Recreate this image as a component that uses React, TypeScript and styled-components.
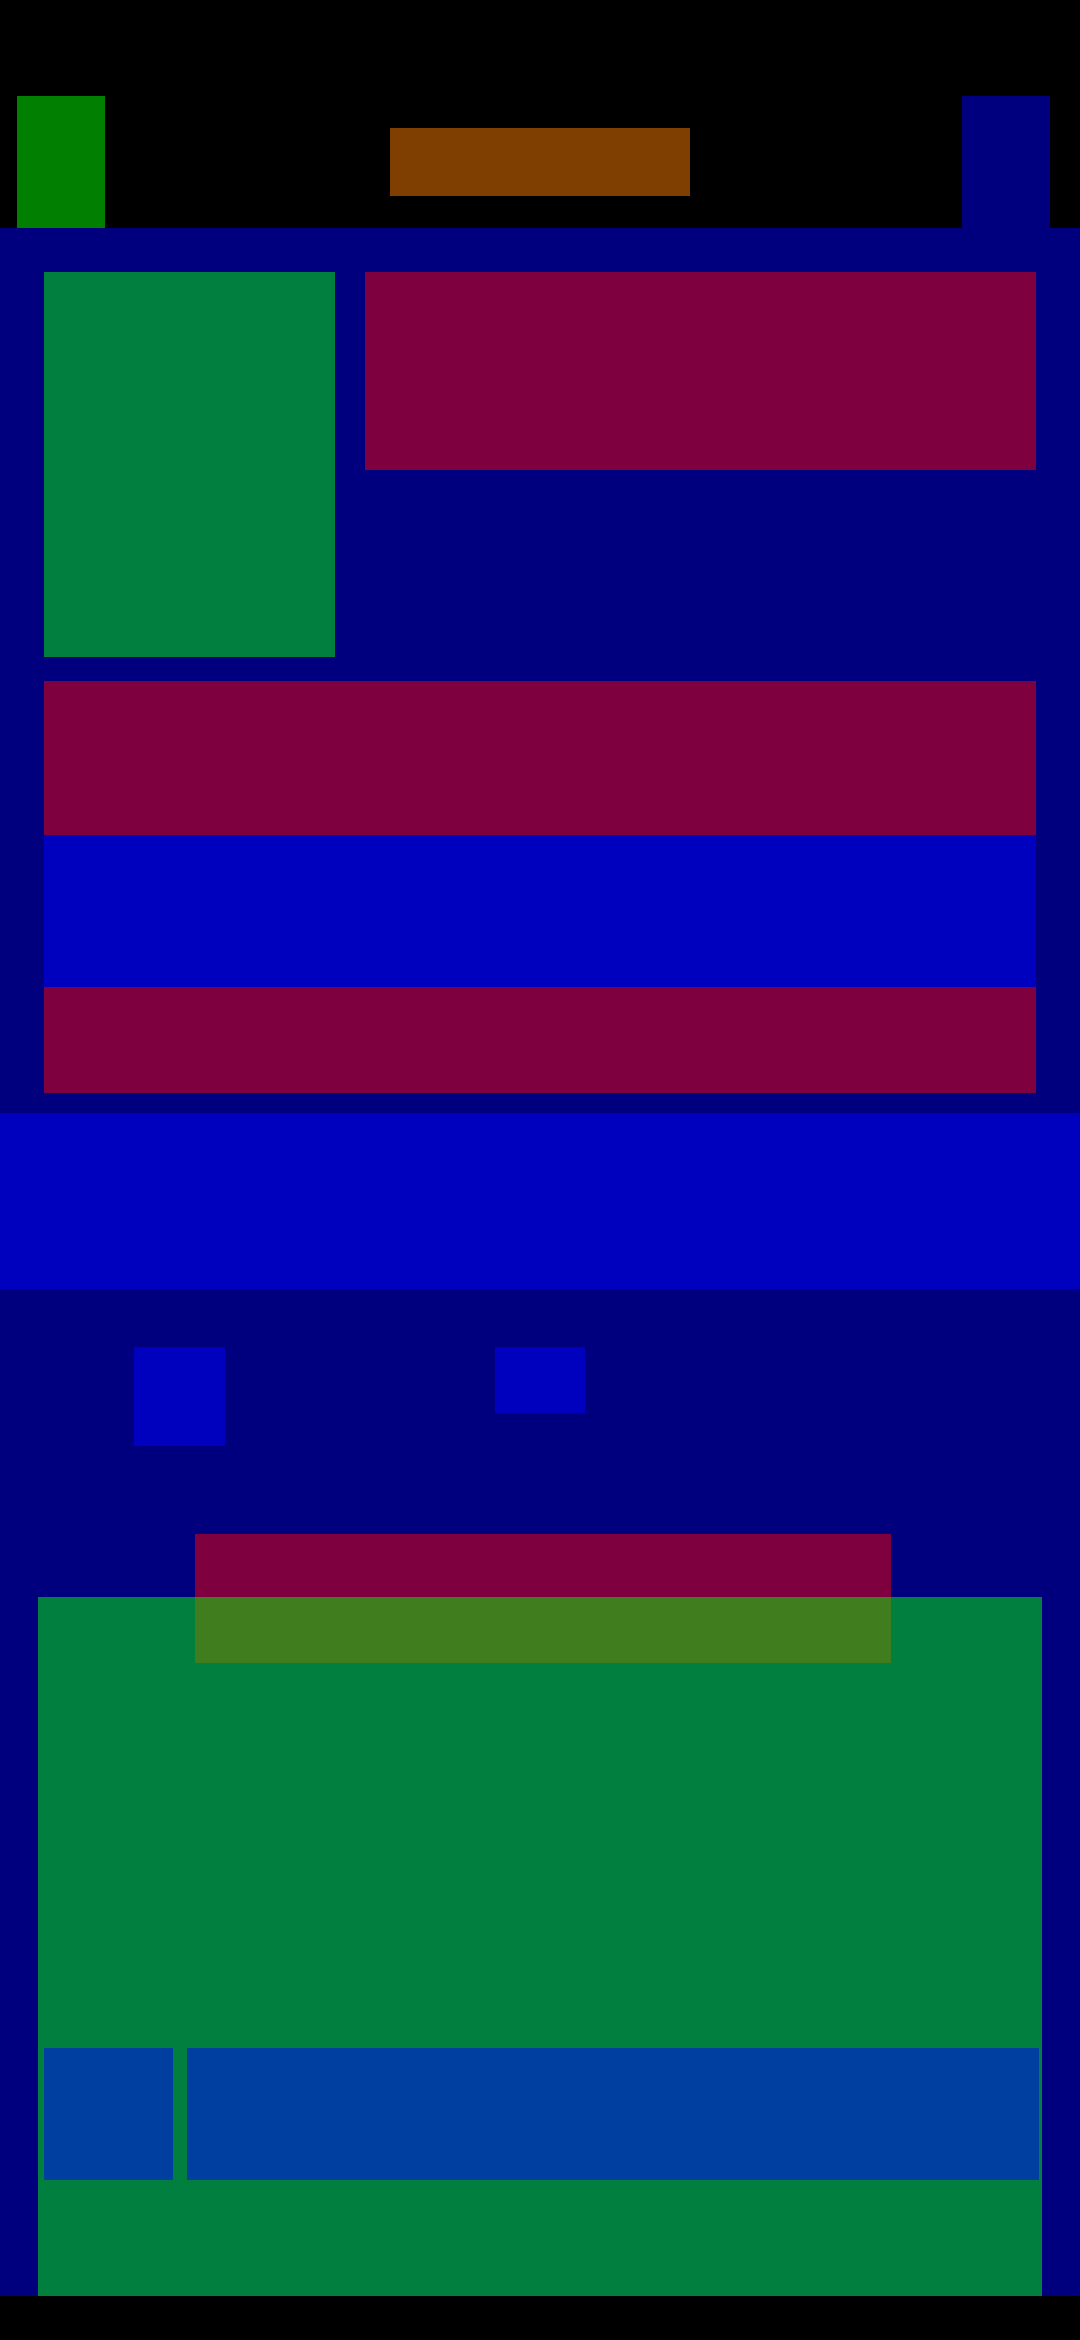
import styled, { createGlobalStyle } from 'styled-components'

const GlobalStyle = createGlobalStyle`
    html, body {
        margin: 0;
        padding: 0;
        background: #000000;
        font-family: 'Liberation Sans', Arial, sans-serif;
    }
    * {
        box-sizing: border-box;
    }
`

const Page = styled.div`
    width: 1080px;
    min-height: 2340px;
    background: #000000;
    display: flex;
    flex-direction: column;
`

const Header = styled.header`
    height: 228px;
    padding-top: 96px;
    display: grid;
    grid-template-columns: 1fr 300px 1fr;
    align-items: center;
`

const HeaderSlot = styled.div<{ $color: string; $side: 'left' | 'right' }>`
    width: 88px;
    height: 132px;
    background: ${({ $color }) => $color};
    justify-self: ${({ $side }) => ($side === 'left' ? 'start' : 'end')};
    margin-left: ${({ $side }) => ($side === 'left' ? '17px' : '0')};
    margin-right: ${({ $side }) => ($side === 'right' ? '30px' : '0')};
`

const Title = styled.div`
    width: 300px;
    height: 68px;
    background: #7f3f00;
`

const Main = styled.main`
    background: #00007f;
    display: flex;
    flex-direction: column;
`

const TopGrid = styled.section`
    padding: 44px 44px 0;
    display: grid;
    grid-template-columns: 291px 1fr;
    gap: 30px;
    align-items: start;
`

const Tile = styled.div<{ $color: string; $height: number }>`
    background: ${({ $color }) => $color};
    height: ${({ $height }) => $height}px;
`

const Stack = styled.section`
    margin: 24px 44px 0;
    display: flex;
    flex-direction: column;
`

const Band = styled.div<{ $color: string; $height: number }>`
    background: ${({ $color }) => $color};
    height: ${({ $height }) => $height}px;
`

const Hero = styled.section`
    margin-top: 20px;
    height: 176px;
    background: #0000bf;
`

const IconRow = styled.div`
    padding: 58px 0 0 134px;
    display: flex;
    align-items: flex-start;
    gap: 270px;
`

const IconBox = styled.div<{ $w: number; $h: number }>`
    width: ${({ $w }) => $w}px;
    height: ${({ $h }) => $h}px;
    background: #0000bf;
`

const CardWrap = styled.div`
    position: relative;
    margin: 151px 38px 0;
`

const Card = styled.div`
    height: 699px;
    background: #007f3f;
    padding: 451px 3px 0 6px;
    display: flex;
    gap: 14px;
    align-items: flex-start;
`

const CardItem = styled.div<{ $grow?: boolean }>`
    height: 132px;
    background: #003f9f;
    width: ${({ $grow }) => ($grow ? 'auto' : '129px')};
    flex: ${({ $grow }) => ($grow ? '1' : 'none')};
`

const Floating = styled.div`
    position: absolute;
    top: -63px;
    left: 157px;
    width: 696px;
    height: 129px;
    background: linear-gradient(to bottom, #7f003f 0 63px, #3f7d1f 63px 100%);
`

const Footer = styled.footer`
    height: 44px;
    background: #000000;
`

export default function App() {
    return (
        <Page>
            <GlobalStyle />
            <Header>
                <HeaderSlot $color='#007f00' $side='left' />
                <Title />
                <HeaderSlot $color='#00007f' $side='right' />
            </Header>
            <Main>
                <TopGrid>
                    <Tile $color='#007f3f' $height={385} />
                    <Tile $color='#7f003f' $height={198} />
                </TopGrid>
                <Stack>
                    <Band $color='#7f003f' $height={154} />
                    <Band $color='#0000bf' $height={152} />
                    <Band $color='#7f003f' $height={106} />
                </Stack>
                <Hero />
                <IconRow>
                    <IconBox $w={91} $h={99} />
                    <IconBox $w={90} $h={66} />
                </IconRow>
                <CardWrap>
                    <Card>
                        <CardItem />
                        <CardItem $grow />
                    </Card>
                    <Floating />
                </CardWrap>
            </Main>
            <Footer />
        </Page>
    )
}
